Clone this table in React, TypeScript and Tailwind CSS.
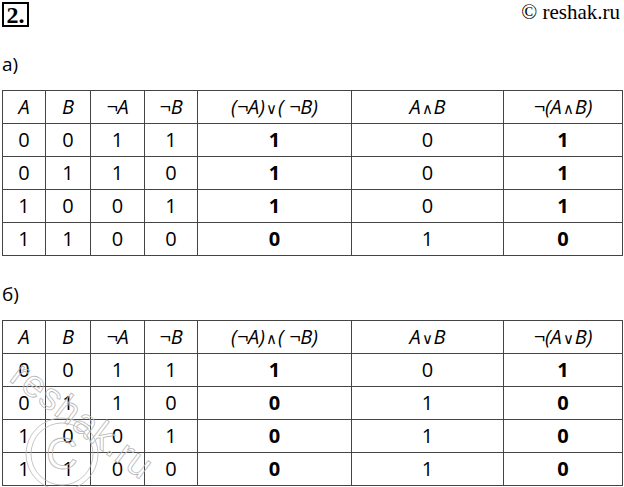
import React from 'react';

// Truth table rows: [A, B, ¬A, ¬B, expr1, expr2, result]
type Row = [string, string, string, string, string, string, string];

const tableA: Row[] = [
  ['0', '0', '1', '1', '1', '0', '1'],
  ['0', '1', '1', '0', '1', '0', '1'],
  ['1', '0', '0', '1', '1', '0', '1'],
  ['1', '1', '0', '0', '0', '1', '0'],
];

const tableB: Row[] = [
  ['0', '0', '1', '1', '1', '0', '1'],
  ['0', '1', '1', '0', '0', '1', '0'],
  ['1', '0', '0', '1', '0', '1', '0'],
  ['1', '1', '0', '0', '0', '1', '0'],
];

const colWidths = ['w-[43px]', 'w-[45px]', 'w-[54px]', 'w-[53px]', 'w-[154px]', 'w-[152px]', 'w-[119px]'];

const Op: React.FC<{ c: string }> = ({ c }) => <span className="text-[15px] mx-[1px] not-italic">{c}</span>;

const TruthTable: React.FC<{ rows: Row[]; op: '∧' | '∨'; inner: '∧' | '∨' }> = ({ rows, op, inner }) => {
  const headers: React.ReactNode[] = [
    'A',
    'B',
    '¬A',
    '¬B',
    <>(¬A)<Op c={op} />( ¬B)</>,
    <>A<Op c={inner} />B</>,
    <>¬(A<Op c={inner} />B)</>,
  ];

  return (
    <table className="border-collapse table-fixed w-[620px] ml-[2px] text-[20px] leading-none text-black">
      <colgroup>
        {colWidths.map((w, i) => (
          <col key={i} className={w} />
        ))}
      </colgroup>
      <thead>
        <tr className="h-[33px]">
          {headers.map((h, i) => (
            <th key={i} className="border border-[#444] font-normal italic text-center p-0">
              {h}
            </th>
          ))}
        </tr>
      </thead>
      <tbody>
        {rows.map((r, ri) => (
          <tr key={ri} className="h-[33px]">
            {r.map((v, ci) => (
              <td
                key={ci}
                className={`border border-[#444] text-center p-0 ${ci === 4 || ci === 6 ? 'font-bold' : ''}`}
              >
                {v}
              </td>
            ))}
          </tr>
        ))}
      </tbody>
    </table>
  );
};

const App: React.FC = () => {
  return (
    <div className="relative w-[624px] h-[487px] bg-white overflow-hidden font-['Open_Sans',sans-serif]">
      {/* Header */}
      <div className="flex justify-between items-start h-[27px]">
        <div className="mt-[2px] ml-[2px] w-[27px] h-[25px] border-2 border-black flex items-center justify-center font-['Liberation_Serif',serif] font-bold text-[24px] leading-none">
          2.
        </div>
        <div className="mr-[4px] font-['Liberation_Serif',serif] text-[21px] leading-[24px] text-black">
          © reshak.ru
        </div>
      </div>

      <div className="mt-[25px] ml-[2px] text-[19px] leading-[24px]">а)</div>
      <div className="mt-[14px]">
        <TruthTable rows={tableA} op="∨" inner="∧" />
      </div>

      <div className="mt-[26px] ml-[2px] text-[19px] leading-[24px]">б)</div>
      <div className="mt-[14px]">
        <TruthTable rows={tableB} op="∧" inner="∨" />
      </div>

      {/* Watermark */}
      <svg className="absolute left-0 top-[340px] pointer-events-none" width="200" height="147" viewBox="0 0 200 147">
        <g fill="none" stroke="#b8b8b8" strokeWidth="0.8">
          <circle cx="62" cy="114" r="36" />
          <circle cx="62" cy="114" r="31" />
          <text
            x="62"
            y="129"
            textAnchor="middle"
            fontFamily="Liberation Sans, sans-serif"
            fontSize="44"
          >
            C
          </text>
          <text
            x="0"
            y="0"
            transform="translate(8 40) rotate(37)"
            fontFamily="Liberation Sans, sans-serif"
            fontSize="38"
            letterSpacing="1"
          >
            reshak.ru
          </text>
        </g>
      </svg>
    </div>
  );
};

export default App;
